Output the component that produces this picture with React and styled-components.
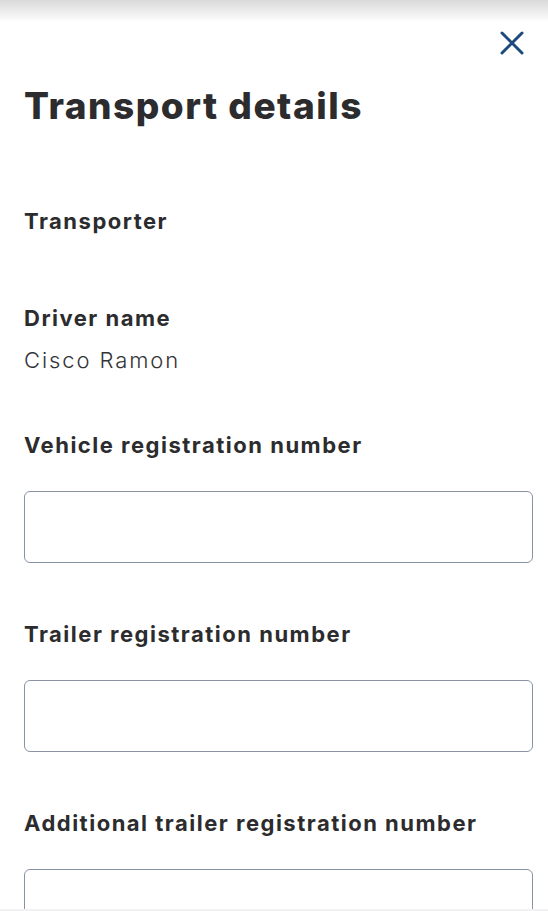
import React from 'react'
import styled, { createGlobalStyle } from 'styled-components'

const GlobalStyle = createGlobalStyle`
  * { box-sizing: border-box; }
  html, body { margin: 0; padding: 0; background: #fff; }
  body {
    font-family: Inter, "Noto Sans", "DejaVu Sans", sans-serif;
    color: #2f2f31;
    -webkit-font-smoothing: antialiased;
  }
`

const Sheet = styled.div`
  min-height: 100vh;
  background: #fff;
  padding: 0 15px 0 24px;
`

const TopShade = styled.div`
  position: fixed;
  top: 0;
  left: 0;
  right: 0;
  height: 22px;
  pointer-events: none;
  background: linear-gradient(to bottom, rgba(0,0,0,0.15), rgba(0,0,0,0));
`

const BottomEdge = styled.div`
  position: fixed;
  left: 0;
  right: 0;
  bottom: 0;
  height: 2px;
  background: #f1f1f2;
`

const Header = styled.div`
  display: flex;
  justify-content: flex-end;
  padding-top: 31px;
  padding-right: 9px;
`

const CloseButton = styled.button`
  display: flex;
  align-items: center;
  justify-content: center;
  width: 24px;
  height: 24px;
  padding: 0;
  border: 0;
  background: none;
  cursor: pointer;
  color: #1d4a7d;
`

const Title = styled.h1`
  margin: 29px 0 0;
  font-size: 37px;
  line-height: 44px;
  font-weight: 800;
  letter-spacing: 1.5px;
  color: #2c2c2e;
`

const Form = styled.div`
  display: flex;
  flex-direction: column;
  gap: 57px;
  margin-top: 79px;
  padding-bottom: 40px;
`

const Field = styled.div`
  display: flex;
  flex-direction: column;
`

const Label = styled.label`
  font-size: 22px;
  line-height: 28px;
  font-weight: 750;
  letter-spacing: 1.5px;
  color: #2c2c2e;
`

const Value = styled.div`
  margin-top: 14px;
  font-size: 22px;
  line-height: 28px;
  font-weight: 300;
  letter-spacing: 1.9px;
  color: #333336;
  &:empty { margin-top: 12px; height: 0; }
`

const TextInput = styled.input`
  margin-top: 32px;
  width: 100%;
  height: 72px;
  border: 1.5px solid #8893a3;
  border-radius: 6px;
  background: #fff;
  padding: 0 16px;
  font: inherit;
  font-size: 22px;
  outline: none;
`

function CloseIcon() {
  return (
    <svg width="24" height="24" viewBox="0 0 24 24" fill="none">
      <path d="M2 2L22 22M22 2L2 22" stroke="currentColor" strokeWidth="3" strokeLinecap="round" />
    </svg>
  )
}

export default function App() {
  return (
    <>
      <GlobalStyle />
      <Sheet>
        <Header>
          <CloseButton aria-label="Close">
            <CloseIcon />
          </CloseButton>
        </Header>
        <Title>Transport details</Title>
        <Form>
          <Field>
            <Label>Transporter</Label>
            <Value></Value>
          </Field>
          <Field>
            <Label>Driver name</Label>
            <Value>Cisco Ramon</Value>
          </Field>
          <Field>
            <Label htmlFor="vehicle">Vehicle registration number</Label>
            <TextInput id="vehicle" type="text" />
          </Field>
          <Field>
            <Label htmlFor="trailer">Trailer registration number</Label>
            <TextInput id="trailer" type="text" />
          </Field>
          <Field>
            <Label htmlFor="trailer2">Additional trailer registration number</Label>
            <TextInput id="trailer2" type="text" />
          </Field>
        </Form>
      </Sheet>
      <TopShade />
      <BottomEdge />
    </>
  )
}
